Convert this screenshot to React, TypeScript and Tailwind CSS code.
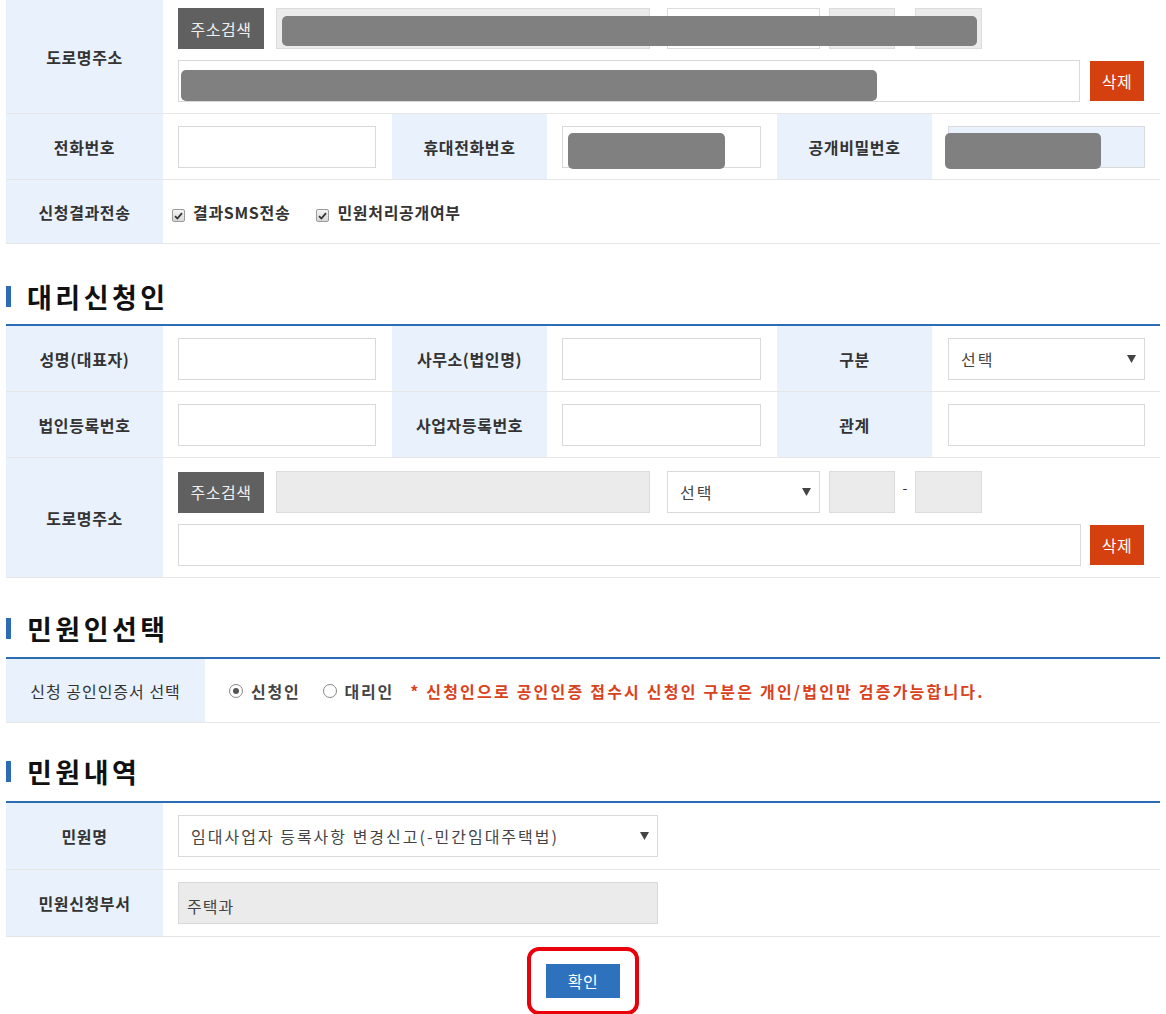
import React from "react";

const FONT = { fontFamily: '"Noto Sans CJK KR", "Noto Sans", sans-serif' };

function Label({ children, className = "" }: { children: React.ReactNode; className?: string }) {
  return (
    <div
      className={`bg-[#e9f1fc] flex items-center justify-center text-[16px] tracking-[0.6px] text-[#333] ${className}`}
    >
      {children}
    </div>
  );
}

function Input({
  className = "",
  bg = "bg-white",
  children,
}: {
  className?: string;
  bg?: string;
  children?: React.ReactNode;
}) {
  return (
    <div
      className={`h-[42px] border border-[#d9d9d9] ${bg} flex items-center px-[12px] text-[16px] tracking-[1px] text-[#444] ${className}`}
    >
      {children}
    </div>
  );
}

function Select({ text, className = "" }: { text: string; className?: string }) {
  return (
    <div
      className={`h-[42px] border border-[#d9d9d9] bg-white flex items-center justify-between pl-[12px] pr-[8px] text-[16px] tracking-[2px] text-[#444] ${className}`}
    >
      <span>{text}</span>
      <svg width="9" height="8" viewBox="0 0 9 8">
        <path d="M0 0 H9 L4.5 8 Z" fill="#444" />
      </svg>
    </div>
  );
}

function Redact({ className }: { className: string }) {
  return <div className={`absolute bg-[#808080] rounded-[5px] ${className}`} />;
}

function Heading({ title, className = "" }: { title: string; className?: string }) {
  return (
    <div className={`flex items-center h-[36px] ${className}`}>
      <div className="w-[5px] h-[21px] bg-[#2c6cb4]" />
      <h2 className="ml-[16px] text-[27px] font-bold text-[#111] tracking-[3.5px] leading-none">{title}</h2>
    </div>
  );
}

function Check({ label }: { label: string }) {
  return (
    <label className="flex items-center gap-[8px] text-[16px] tracking-[0.7px] font-bold text-[#333]">
      <span className="mt-[8px] w-[13px] h-[13px] rounded-[2px] border border-[#9a9a9a] bg-gradient-to-b from-[#f4f4f4] to-[#d8d8d8] flex items-center justify-center">
        <svg width="9" height="8" viewBox="0 0 9 8">
          <path d="M1 4.2 L3.4 6.5 L8 1.2" stroke="#333" strokeWidth="1.8" fill="none" />
        </svg>
      </span>
      {label}
    </label>
  );
}

function Radio({ label, checked }: { label: string; checked?: boolean }) {
  return (
    <label className="flex items-center gap-[8px] text-[16px] tracking-[1.8px] font-bold text-[#444]">
      <span className="w-[14px] h-[14px] rounded-full border border-[#888] bg-white flex items-center justify-center">
        {checked && <span className="w-[6px] h-[6px] rounded-full bg-[#555]" />}
      </span>
      {label}
    </label>
  );
}

function SearchBtn() {
  return (
    <div className="w-[86px] h-[41px] bg-[#606060] text-[#eee] text-[16px] tracking-[0.5px] flex items-center justify-center">
      주소검색
    </div>
  );
}

function DeleteBtn() {
  return (
    <div className="w-[54px] h-[40px] bg-[#d4400e] text-white text-[16px] tracking-[0.5px] flex items-center justify-center">
      삭제
    </div>
  );
}

const GRID = "grid grid-cols-[157px_229px_155px_230px_155px_1fr]";
const ROW = "border-b border-[#e6e6e6]";

export default function App() {
  return (
    <div className="bg-white min-h-[1014px] text-[#333]" style={FONT}>
      <div className="ml-[6px] w-[1154px]">
        {/* 신청인 (상단 잘린 부분) */}
        <div className={`flex ${ROW} h-[114px]`}>
          <Label className="w-[157px] font-bold">도로명주소</Label>
          <div className="relative flex-1 pl-[15px] pr-[15px] pt-[8px]">
            <div className="flex items-center">
              <SearchBtn />
              <div className="ml-[12px] w-[374px] h-[41px] bg-[#ebebeb] border border-[#dcdcdc]" />
              <div className="ml-[17px] w-[153px] h-[41px] bg-white border border-[#dcdcdc]" />
              <div className="ml-[9px] w-[66px] h-[41px] bg-[#ebebeb] border border-[#dcdcdc]" />
              <span className="w-[20px] text-center text-[14px]">-</span>
              <div className="w-[67px] h-[41px] bg-[#ebebeb] border border-[#dcdcdc]" />
            </div>
            <div className="flex items-center mt-[11px]">
              <Input className="w-[902px] h-[41px]" />
              <div className="ml-[10px]">
                <DeleteBtn />
              </div>
            </div>
            <Redact className="left-[119px] top-[16px] w-[695px] h-[30px]" />
            <Redact className="left-[18px] top-[70px] w-[696px] h-[31px]" />
          </div>
        </div>
        <div className={`${GRID} ${ROW} h-[66px]`}>
          <Label className="font-bold">전화번호</Label>
          <div className="flex items-center pl-[15px] pr-[16px]">
            <Input className="w-full" />
          </div>
          <Label className="font-bold">휴대전화번호</Label>
          <div className="relative flex items-center pl-[15px] pr-[16px]">
            <Input className="w-full" />
            <Redact className="left-[21px] top-[19px] w-[157px] h-[36px]" />
          </div>
          <Label className="font-bold">공개비밀번호</Label>
          <div className="relative flex items-center pl-[16px] pr-[15px]">
            <Input className="w-full" bg="bg-[#e9f1fc]" />
            <Redact className="left-[13px] top-[19px] w-[156px] h-[36px]" />
          </div>
        </div>
        <div className={`flex ${ROW} h-[64px]`}>
          <Label className="w-[157px] font-bold">신청결과전송</Label>
          <div className="flex items-center gap-[26px] pl-[9px]">
            <Check label="결과SMS전송" />
            <Check label="민원처리공개여부" />
          </div>
        </div>

        {/* 대리신청인 */}
        <Heading title="대리신청인" className="mt-[34px] mb-[10px]" />
        <div className="border-t-2 border-[#2c6cb4]">
          <div className={`${GRID} ${ROW} h-[66px]`}>
            <Label className="font-bold">성명(대표자)</Label>
            <div className="flex items-center pl-[15px] pr-[16px]">
              <Input className="w-full" />
            </div>
            <Label className="font-bold">사무소(법인명)</Label>
            <div className="flex items-center pl-[15px] pr-[16px]">
              <Input className="w-full" />
            </div>
            <Label className="font-bold">구분</Label>
            <div className="flex items-center pl-[16px] pr-[15px]">
              <Select text="선택" className="w-full" />
            </div>
          </div>
          <div className={`${GRID} ${ROW} h-[66px]`}>
            <Label className="font-bold">법인등록번호</Label>
            <div className="flex items-center pl-[15px] pr-[16px]">
              <Input className="w-full" />
            </div>
            <Label className="font-bold">사업자등록번호</Label>
            <div className="flex items-center pl-[15px] pr-[16px]">
              <Input className="w-full" />
            </div>
            <Label className="font-bold">관계</Label>
            <div className="flex items-center pl-[16px] pr-[15px]">
              <Input className="w-full" />
            </div>
          </div>
          <div className={`flex ${ROW} h-[120px]`}>
            <Label className="w-[157px] font-bold">도로명주소</Label>
            <div className="flex-1 pl-[15px] pr-[15px] pt-[13px]">
              <div className="flex items-center">
                <SearchBtn />
                <div className="ml-[12px] w-[374px] h-[42px] bg-[#ebebeb] border border-[#dcdcdc]" />
                <Select text="선택" className="ml-[17px] w-[153px]" />
                <div className="ml-[9px] w-[66px] h-[42px] bg-[#ebebeb] border border-[#dcdcdc]" />
                <span className="w-[20px] text-center text-[14px] -mt-[10px]">-</span>
                <div className="w-[67px] h-[42px] bg-[#ebebeb] border border-[#dcdcdc]" />
              </div>
              <div className="flex items-center mt-[11px]">
                <Input className="w-[903px]" />
                <div className="ml-[9px]">
                  <DeleteBtn />
                </div>
              </div>
            </div>
          </div>
        </div>

        {/* 민원인선택 */}
        <Heading title="민원인선택" className="mt-[32px] mb-[11px]" />
        <div className="border-t-2 border-[#2c6cb4]">
          <div className={`flex ${ROW} h-[64px]`}>
            <Label className="w-[199px] tracking-[1px]">신청 공인인증서 선택</Label>
            <div className="flex items-center pl-[24px]">
              <Radio label="신청인" checked />
              <div className="ml-[22px]">
                <Radio label="대리인" />
              </div>
              <span className="ml-[16px] text-[16px] tracking-[2.2px] font-bold text-[#d9421c]">
                * 신청인으로 공인인증 접수시 신청인 구분은 개인/법인만 검증가능합니다.
              </span>
            </div>
          </div>
        </div>

        {/* 민원내역 */}
        <Heading title="민원내역" className="mt-[30px] mb-[12px]" />
        <div className="border-t-2 border-[#2c6cb4]">
          <div className={`flex ${ROW} h-[67px]`}>
            <Label className="w-[157px] font-bold">민원명</Label>
            <div className="flex items-center pl-[15px]">
              <Select text="임대사업자 등록사항 변경신고(-민간임대주택법)" className="w-[480px] h-[41px]" />
            </div>
          </div>
          <div className={`flex ${ROW} h-[67px]`}>
            <Label className="w-[157px] font-bold">민원신청부서</Label>
            <div className="flex items-center pl-[15px]">
              <Input className="w-[480px] h-[41px] pl-[8px] pt-[6px]" bg="bg-[#ebebeb]">
                주택과
              </Input>
            </div>
          </div>
        </div>

        <div className="flex justify-center mt-[10px]">
          <div className="border-4 border-[#e8000b] rounded-[12px] px-[15px] py-[13px]">
            <button className="w-[74px] h-[34px] bg-[#2e72bd] text-white text-[16px] tracking-[0.5px] flex items-center justify-center">
              확인
            </button>
          </div>
        </div>
      </div>
    </div>
  );
}
